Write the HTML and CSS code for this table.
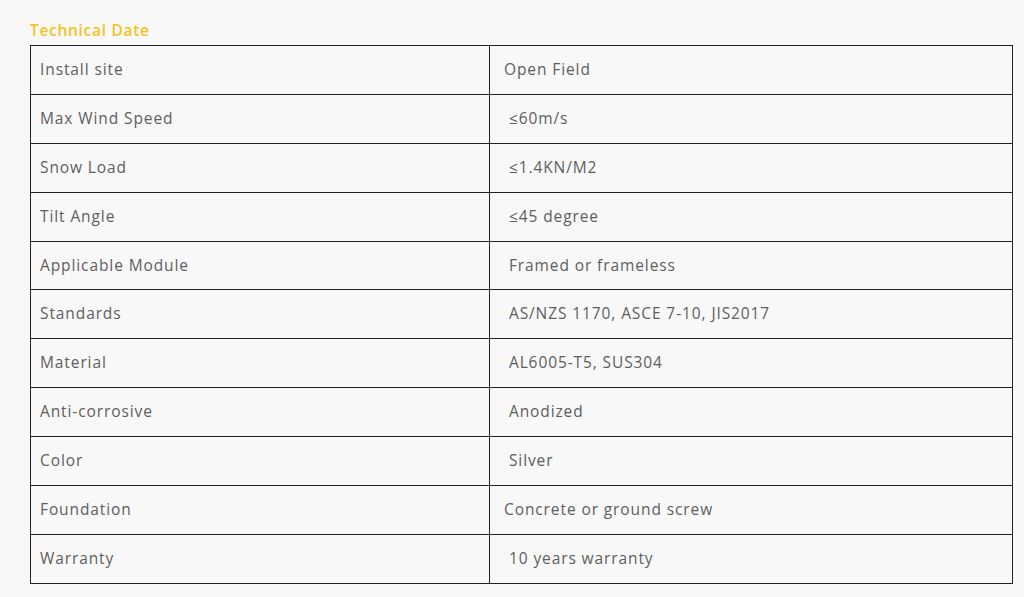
FILE: index.html
```html
<!DOCTYPE html>
<html>
<head>
<meta charset="utf-8">
<link rel="stylesheet" href="styles.css">
</head>
<body>
<div class="wrap">
  <h3 class="title">Technical Date</h3>
  <table class="spec">
    <tr><td class="k">Install site</td><td class="v">Open Field</td></tr>
    <tr><td class="k">Max Wind Speed</td><td class="v">&nbsp;≤60m/s</td></tr>
    <tr><td class="k">Snow Load</td><td class="v">&nbsp;≤1.4KN/M2</td></tr>
    <tr><td class="k">Tilt Angle</td><td class="v">&nbsp;≤45 degree</td></tr>
    <tr><td class="k">Applicable Module</td><td class="v">&nbsp;Framed or frameless</td></tr>
    <tr><td class="k">Standards</td><td class="v">&nbsp;AS/NZS 1170, ASCE 7-10, JIS2017</td></tr>
    <tr><td class="k">Material</td><td class="v">&nbsp;AL6005-T5, SUS304</td></tr>
    <tr><td class="k">Anti-corrosive</td><td class="v">&nbsp;Anodized</td></tr>
    <tr><td class="k">Color</td><td class="v">&nbsp;Silver</td></tr>
    <tr><td class="k">Foundation</td><td class="v">Concrete or ground screw</td></tr>
    <tr><td class="k">Warranty</td><td class="v">&nbsp;10 years warranty</td></tr>
  </table>
</div>
</body>
</html>
```
FILE: styles.css
```css
html, body {
  margin: 0;
  padding: 0;
  background: #f8f8f8;
}
body {
  font-family: "Open Sans", "DejaVu Sans", sans-serif;
  color: #5e5e5e;
}
.wrap {
  padding: 20px 12px 0 30px;
}
.title {
  margin: 0 0 5px 0;
  font-size: 15.5px;
  line-height: 20px;
  font-weight: 600;
  letter-spacing: 0.7px;
  color: #f8c21c;
}
.spec {
  width: 983px;
  border-collapse: collapse;
  font-size: 15.5px;
  letter-spacing: 0.9px;
}
.spec td {
  border: 1px solid #222;
  height: 45.9px;
  padding: 0 0 2px 0;
  vertical-align: middle;
  line-height: 20px;
}
.spec td.k {
  width: 449px;
  padding-left: 9px;
}
.spec td.v {
  padding-left: 14px;
}
```
